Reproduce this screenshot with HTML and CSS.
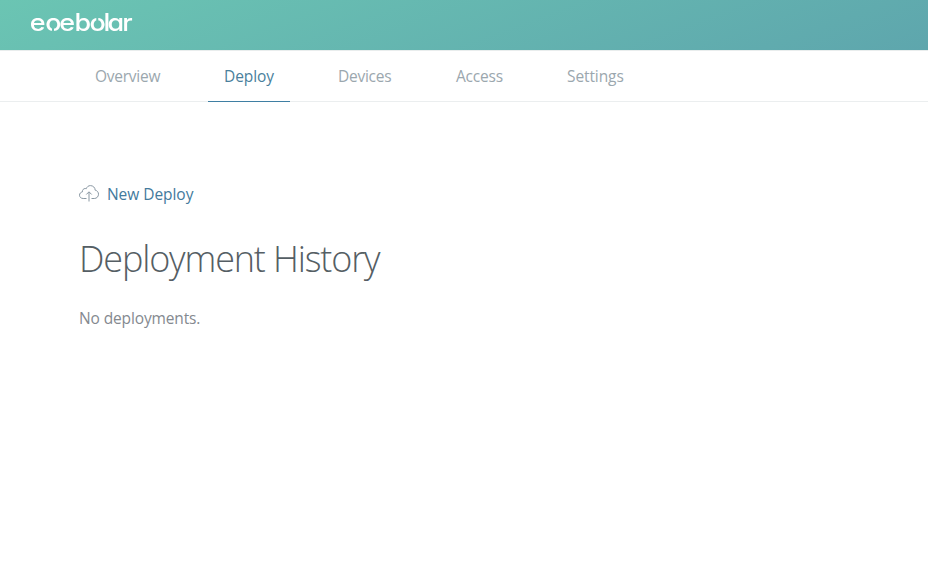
FILE: index.html
```html
<!DOCTYPE html>
<html lang="en">
<head>
<meta charset="utf-8">
<title>Deploy</title>
<link rel="stylesheet" href="styles.css">
</head>
<body>
<header class="topbar">
  <svg class="logo" width="110" height="42" viewBox="0 0 110 42" role="img" aria-label="eoebolar">
    <mask id="slits" maskUnits="userSpaceOnUse" x="-5" y="0" width="115" height="42">
      <rect x="-5" width="115" height="42" fill="#fff"/>
      <path d="M23 23v7M67.300 11v7" stroke="#000" stroke-width="2"/>
    </mask>
    <g mask="url(#slits)"><text class="wordmark" transform="scale(1.12 1)" x="-0.3 13.7 26.1 39.7 53.2 65.7 69.3 82.4" y="27">eoebolar</text></g>
  </svg>
</header>
<nav class="tabs">
  <a class="tab"><span class="overview">Overview</span></a>
  <a class="tab active"><span class="deploy">Deploy</span></a>
  <a class="tab"><span class="devices">Devices</span></a>
  <a class="tab"><span class="access">Access</span></a>
  <a class="tab"><span class="settings">Settings</span></a>
</nav>
<main class="content">
  <a class="new-deploy">
    <svg class="cloud" width="20" height="18" viewBox="0 0 20 18" fill="none">
      <path d="M7.5 13.5H4.2C2 13.5.5 12 .5 10.200c0-1.700 1.200-3 2.900-3.300C3.300 4.800 4.600 3.500 6.200 3.500c.4 0 .8.100 1.100.200C8 1.700 9.500.600 11.400.600c2.700 0 4.700 2 4.800 4.600 1.900.300 3.300 2 3.300 4 0 2.400-1.800 4.300-4.200 4.300H12.500M10 16.500V7M7.300 9.500L10 6.800l2.700 2.700"/>
    </svg>
    <span>New Deploy</span>
  </a>
  <h1 class="title">Deployment History</h1>
  <p class="empty">No deployments.</p>
</main>
</body>
</html>
```
FILE: styles.css
```css
* { box-sizing: border-box; }
body {
  margin: 0;
  background: #fff;
  font: 15.5px/24px "Open Sans", "Noto Sans", sans-serif;
}
.topbar {
  height: 50px;
  padding: 4px 30px;
  background: linear-gradient(160deg, #6bc5b3, #5ea6ad);
}
.logo { display: block; overflow: visible; }
.wordmark {
  font: 500 24px Inter, sans-serif;
  font-feature-settings: "cv11";
  fill: #fff;
}
.tabs {
  display: flex;
  gap: 32px;
  height: 52px;
  padding-left: 79px;
  border-top: 1px solid #e9eded;
  border-bottom: 1px solid #ebeeef;
}
.tab {
  height: 51px;
  padding: 13px 16px 0;
  color: #9ba7ae;
  border-bottom: 1px solid transparent;
}
.tab span { display: block; white-space: nowrap; }
.overview { width: 65px; letter-spacing: -0.25px; }
.deploy { width: 50px; letter-spacing: -0.1px; }
.devices { width: 54px; letter-spacing: -0.25px; }
.access { width: 47px; letter-spacing: -0.2px; }
.settings { width: 57px; letter-spacing: -0.1px; }
.active { color: #4a7f9c; border-color: #3f7fa3; }
.content { padding: 80px 79px; }
.new-deploy {
  display: flex;
  gap: 8px;
  color: #437a9c;
  letter-spacing: -0.05px;
}
.cloud { margin-top: 3px; stroke: #8a98a3; stroke-width: 1; }
.title {
  margin: 28px 0 0;
  color: #555e64;
  font-size: 36px;
  line-height: 50px;
  font-weight: 300;
  letter-spacing: -1.15px;
}
.empty { margin: 22px 0 0; color: #84898f; letter-spacing: -0.13px; }
```
